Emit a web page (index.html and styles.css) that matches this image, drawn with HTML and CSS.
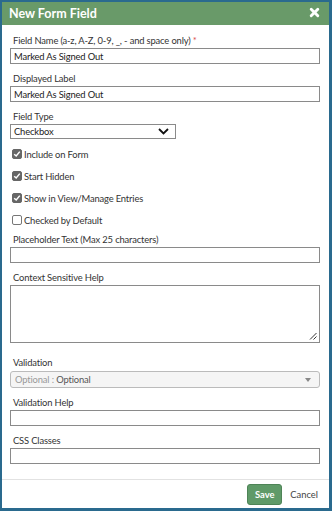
FILE: index.html
```html
<!DOCTYPE html>
<html lang="en">
<head>
    <meta charset="UTF-8">
    <meta name="viewport" content="width=device-width, initial-scale=1.0">
    <title>New Form Field</title>
    <link rel="stylesheet" href="styles.css">
</head>
<body>
    <div class="dialog">
        <div class="dialog-header">
            <span class="dialog-title">New Form Field</span>
            <svg class="close-icon" width="11" height="11" viewBox="0 0 10 10">
                <path d="M2 2 L8 8 M8 2 L2 8" stroke="#fff" stroke-width="2.6" stroke-linecap="round"/>
            </svg>
        </div>

        <div class="dialog-body">
            <div class="field">
                <label>Field Name (a-z, A-Z, 0-9, _, - and space only) <span class="req">*</span></label>
                <input type="text" class="text-input" value="Marked As Signed Out">
            </div>

            <div class="field">
                <label>Displayed Label</label>
                <input type="text" class="text-input" value="Marked As Signed Out">
            </div>

            <div class="field">
                <label>Field Type</label>
                <div class="type-select">
                    <span>Checkbox</span>
                    <svg width="11" height="7" viewBox="0 0 11 7">
                        <path d="M1 1 L5.5 5.5 L10 1" fill="none" stroke="#111" stroke-width="1.8"/>
                    </svg>
                </div>
            </div>

            <div class="checks">
                <div class="check-row"><span class="box checked"><svg width="8" height="8" viewBox="0 0 8 8"><path d="M1.2 4.2 L3.2 6 L6.8 1.6" fill="none" stroke="#fff" stroke-width="1.5"/></svg></span>Include on Form</div>
                <div class="check-row"><span class="box checked"><svg width="8" height="8" viewBox="0 0 8 8"><path d="M1.2 4.2 L3.2 6 L6.8 1.6" fill="none" stroke="#fff" stroke-width="1.5"/></svg></span>Start Hidden</div>
                <div class="check-row"><span class="box checked"><svg width="8" height="8" viewBox="0 0 8 8"><path d="M1.2 4.2 L3.2 6 L6.8 1.6" fill="none" stroke="#fff" stroke-width="1.5"/></svg></span>Show in View/Manage Entries</div>
                <div class="check-row"><span class="box"></span>Checked by Default</div>
            </div>

            <div class="field">
                <label>Placeholder Text (Max 25 characters)</label>
                <input type="text" class="text-input">
            </div>

            <div class="field">
                <label>Context Sensitive Help</label>
                <div class="text-area">
                    <svg class="grip" width="8" height="8" viewBox="0 0 8 8">
                        <path d="M1 7.5 L7.5 1 M4.5 7.5 L7.5 4.5" stroke="#333" stroke-width="1"/>
                    </svg>
                </div>
            </div>

            <div class="field validation">
                <label>Validation</label>
                <div class="valid-select">
                    <span><span class="muted">Optional :</span> Optional</span>
                    <span class="caret"></span>
                </div>
            </div>

            <div class="field">
                <label>Validation Help</label>
                <input type="text" class="text-input">
            </div>

            <div class="field">
                <label>CSS Classes</label>
                <input type="text" class="text-input">
            </div>
        </div>

        <div class="dialog-footer">
            <button class="save-btn">Save</button>
            <span class="cancel-link">Cancel</span>
        </div>
    </div>
</body>
</html>
```

FILE: styles.css
```css
body {
    margin: 0;
    font-family: Lato, 'Open Sans', sans-serif;
    background-color: #2a6a8e;
}

.dialog {
    width: 332px;
    height: 511px;
    box-sizing: border-box;
    border: 2px solid #2a6a8e;
    border-right-width: 3px;
    border-bottom-width: 3px;
    background-color: #fff;
    display: flex;
    flex-direction: column;
}

.dialog-header {
    height: 23px;
    background-color: #699a69;
    display: flex;
    align-items: center;
    justify-content: space-between;
    padding: 0 9px 0 7px;
    flex-shrink: 0;
}

.dialog-title {
    color: #fff;
    font-size: 12.5px;
    font-weight: bold;
}

.close-icon {
    margin-top: -2px;
}

.dialog-body {
    padding: 10px 9px 0 8px;
    flex: 1;
}

.field {
    margin-bottom: 9px;
}

.field label {
    display: block;
    font-size: 9.4px;
    letter-spacing: -0.15px;
    color: #333;
    line-height: 12px;
    margin: 0 0 1px 3px;
}

.req {
    color: #d9534f;
}

.text-input {
    display: block;
    width: 100%;
    height: 16px;
    box-sizing: border-box;
    margin: 0;
    padding: 0 3px;
    border: 1px solid #8a8a8a;
    font-family: Lato, 'Open Sans', sans-serif;
    font-size: 9.4px;
    letter-spacing: -0.15px;
    color: #222;
}

.type-select {
    width: 166px;
    height: 15px;
    box-sizing: border-box;
    border: 1px solid #8a8a8a;
    display: flex;
    align-items: center;
    justify-content: space-between;
    padding: 0 6px 0 3px;
    font-size: 9.4px;
    letter-spacing: -0.15px;
    color: #222;
}

.checks {
    display: flex;
    flex-direction: column;
    gap: 10px;
    padding: 0 0 8px 2px;
}

.check-row {
    display: flex;
    align-items: center;
    font-size: 9.4px;
    letter-spacing: -0.15px;
    color: #333;
    height: 12px;
}

.box {
    width: 10px;
    height: 10px;
    box-sizing: border-box;
    border: 1px solid #777;
    border-radius: 2px;
    margin-right: 2px;
    display: flex;
    align-items: center;
    justify-content: center;
    background-color: #fff;
}

.box.checked {
    background-color: #666;
    border-color: #666;
}

.text-area {
    height: 58px;
    box-sizing: border-box;
    border: 1px solid #8a8a8a;
    display: flex;
    align-items: flex-end;
    justify-content: flex-end;
    padding: 0 2px 2px 0;
}

.validation {
    margin-top: 14px;
}

.validation label {
    margin-bottom: 2px;
}

.valid-select {
    height: 17px;
    box-sizing: border-box;
    border: 1px solid #bbb;
    border-radius: 3px;
    background-color: #f5f5f5;
    display: flex;
    align-items: center;
    justify-content: space-between;
    padding: 0 8px 0 4px;
    font-size: 9.4px;
    letter-spacing: -0.15px;
    color: #555;
}

.muted {
    color: #999;
}

.caret {
    width: 0;
    height: 0;
    border-left: 3px solid transparent;
    border-right: 3px solid transparent;
    border-top: 4px solid #888;
}

.dialog-footer {
    border-top: 1px solid #e2e2e2;
    height: 28px;
    display: flex;
    align-items: center;
    justify-content: flex-end;
    gap: 8px;
    padding: 0 11px 0 0;
    flex-shrink: 0;
}

.save-btn {
    background-color: #5f9a68;
    color: #fff;
    border: 1px solid #4e8457;
    border-radius: 3px;
    font-family: Lato, 'Open Sans', sans-serif;
    font-size: 9.4px;
    font-weight: bold;
    width: 35px;
    height: 21px;
    padding: 0;
}

.cancel-link {
    font-size: 9.4px;
    color: #444;
}
```
